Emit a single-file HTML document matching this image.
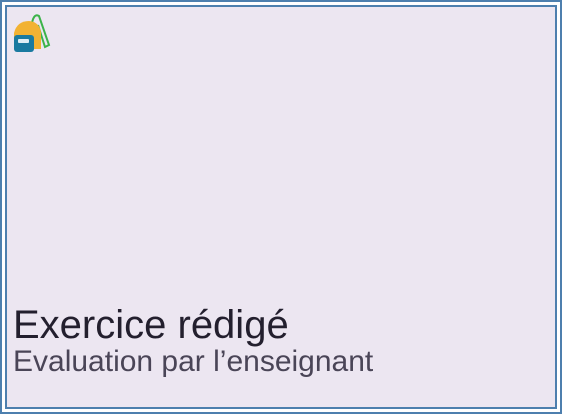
<!DOCTYPE html>
<html><head><meta charset="utf-8"><style>
html,body{margin:0;padding:0;background:#fff}
.o{position:absolute;left:0;top:0;width:558px;height:410px;border:2px solid #4d7fae;background:#fff}
.i{position:absolute;left:3px;top:3px;width:548px;height:400px;border:2px solid #4d7fae;background:#ece6f1}
.t{position:absolute;left:6px;top:296px;font-family:"Liberation Sans",sans-serif;font-size:40px;line-height:45px;color:#231f2e;white-space:nowrap}
.s{position:absolute;left:6px;top:339px;font-family:"Liberation Sans",sans-serif;font-size:30px;line-height:32px;color:#4a4557;white-space:nowrap}
svg{position:absolute;left:6px;top:6px}
</style></head><body>
<div class="o"><div class="i">
<svg width="38" height="40" viewBox="0 0 38 40">
<path d="M19 10 Q21 0 26 3 L36 32 L32 34 L25 12" fill="none" stroke="#3cb34a" stroke-width="2"/>
<path d="M1 20 Q4 8 16 8 Q27 9 28 20 L28 36 L1 36 Z" fill="#f2b233"/>
<rect x="1" y="22" width="20" height="17" rx="3" fill="#1a7aa0"/>
<rect x="5" y="26" width="11" height="4" rx="1" fill="#dfeef5"/>
</svg>
<div class="t">Exercice rédigé</div>
<div class="s">Evaluation par l’enseignant</div>
</div></div>
</body></html>
